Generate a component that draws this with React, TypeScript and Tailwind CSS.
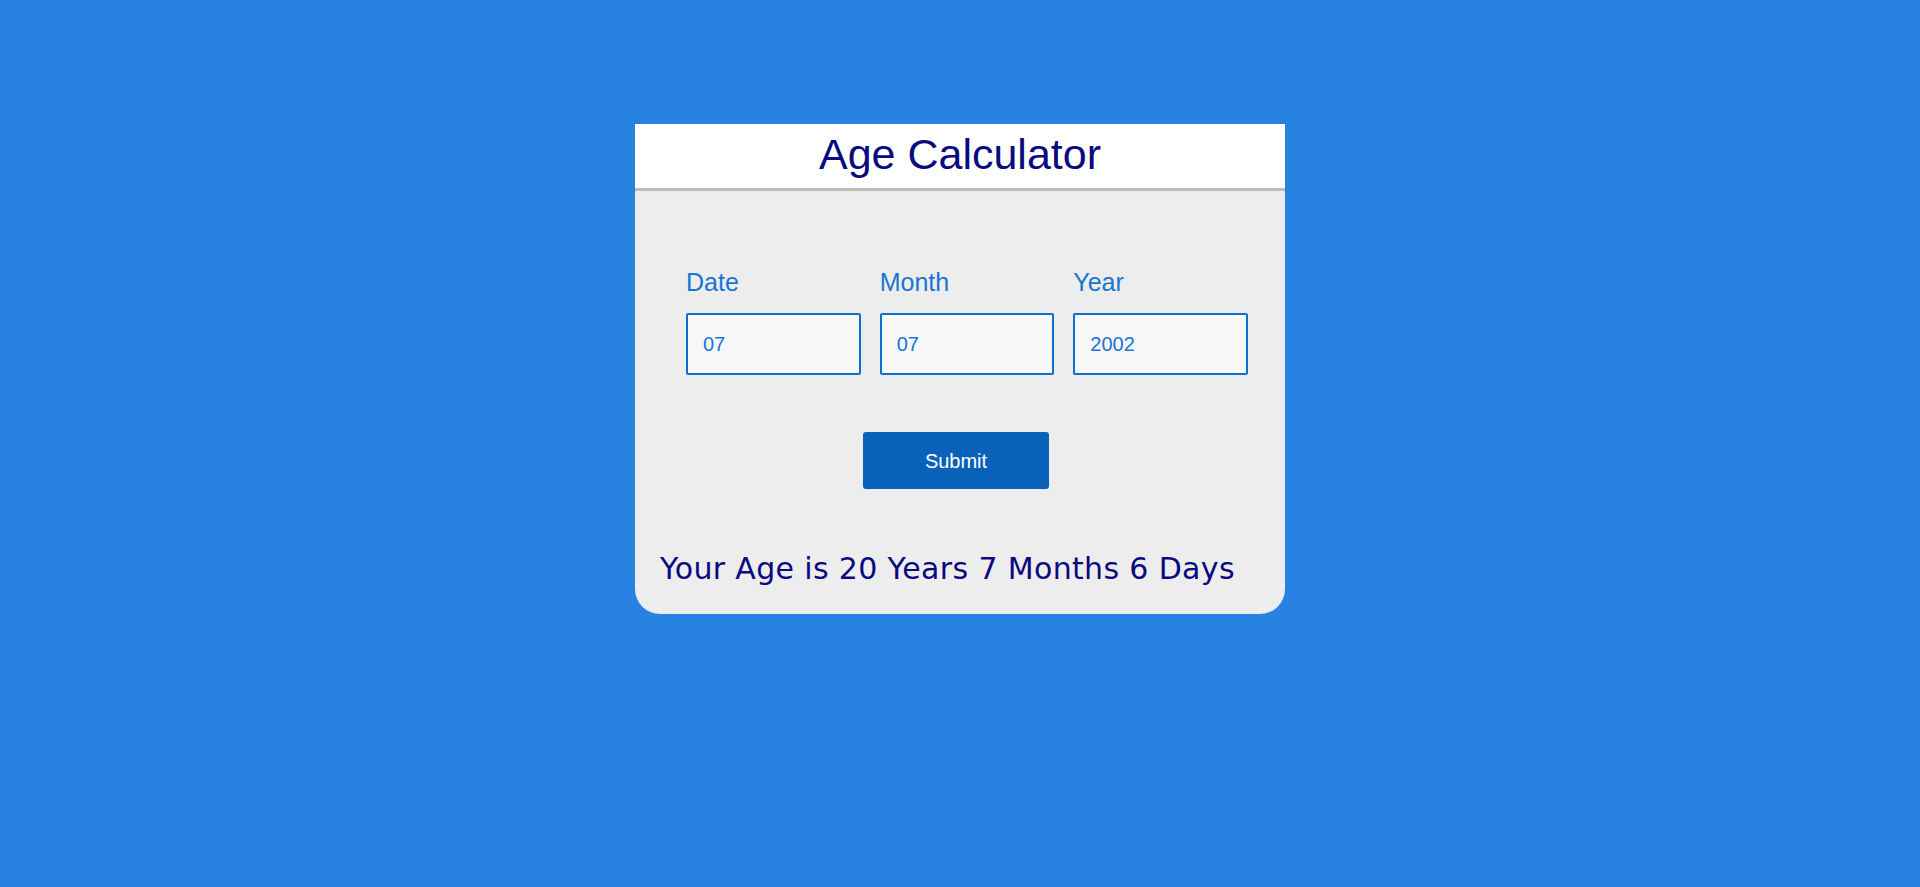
import { useState } from "react";

const Field = ({ label, value }: { label: string; value: string }) => {
  const [val, setVal] = useState(value);
  return (
    <div className="flex flex-col">
      <label className="text-[25px] leading-[30px] text-[#1a74d2] mb-[16px]">{label}</label>
      <input
        value={val}
        onChange={(e) => setVal(e.target.value)}
        className="h-[62px] w-full bg-[#f7f7f7] border-2 border-[#0a6fcf] rounded-[2px] px-[15px] text-[20px] text-[#1a74d2] outline-none"
      />
    </div>
  );
};

const App = () => {
  return (
    <div
      className="min-h-screen bg-[#2882e2] pt-[124px]"
      style={{ fontFamily: '"Liberation Sans", Arial, sans-serif' }}
    >
      <div className="mx-auto w-[650px] bg-[#ededed] rounded-b-[25px] overflow-hidden">
        {/* Title bar */}
        <div className="h-[67px] bg-white border-b-[3px] border-[#bdbdbd] flex items-center justify-center">
          <h1 className="text-[43px] leading-none text-[#0a0a80] pb-[3px]">Age Calculator</h1>
        </div>

        {/* Inputs */}
        <div className="pl-[51px] pr-[37px] pt-[76px]">
          <div className="grid grid-cols-3 gap-x-[19px]">
            <Field label="Date" value="07" />
            <Field label="Month" value="07" />
            <Field label="Year" value="2002" />
          </div>
        </div>

        <div className="flex justify-center pt-[57px] pr-[8px]">
          <button className="w-[186px] h-[57px] bg-[#0862b9] rounded-[3px] text-white text-[20px]">
            Submit
          </button>
        </div>

        <p
          className="pl-[25px] pt-[62px] pb-[27px] text-[30px] leading-[36px] text-[#0a0a80] tracking-[0.35px]"
          style={{ fontFamily: '"DejaVu Sans", Verdana, sans-serif' }}
        >
          Your Age is 20 Years 7 Months 6 Days
        </p>
      </div>
    </div>
  );
};

export default App;
